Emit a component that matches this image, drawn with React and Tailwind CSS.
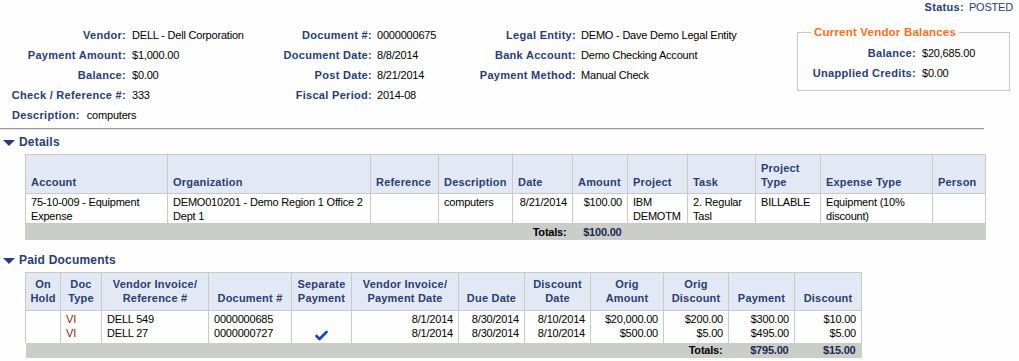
const blue = "text-[#2a3d73]";

const Label = ({ children, className = "" }) => (
  <div className={`font-bold tracking-[0.3px] ${blue} text-right ${className}`}>{children}</div>
);

const Triangle = () => (
  <svg width="12" height="7" viewBox="0 0 12 7" className="mr-[4px] mt-[3px]">
    <polygon points="0,0 12,0 6,6" fill="#2a3d73" />
  </svg>
);

const Check = () => (
  <svg width="13" height="11" viewBox="0 0 13 11" className="block mx-auto">
    <path d="M1.5 6 L4.5 9 L11.5 2" stroke="#1c3fd0" strokeWidth="2.6" fill="none" strokeLinecap="round" strokeLinejoin="round" />
  </svg>
);

const SectionTitle = ({ children }) => (
  <div className={`flex items-center h-[14px] pl-[3px] font-bold tracking-[0.2px] ${blue} text-[12px]`}>
    <Triangle />
    {children}
  </div>
);

const infoRows = [
  ["Vendor:", "DELL - Dell Corporation", "Document #:", "0000000675", "Legal Entity:", "DEMO - Dave Demo Legal Entity"],
  ["Payment Amount:", "$1,000.00", "Document Date:", "8/8/2014", "Bank Account:", "Demo Checking Account"],
  ["Balance:", "$0.00", "Post Date:", "8/21/2014", "Payment Method:", "Manual Check"],
  ["Check / Reference #:", "333", "Fiscal Period:", "2014-08", "", ""],
];

const detailCols = [
  ["Account", 142],
  ["Organization", 203],
  ["Reference", 68],
  ["Description", 74],
  ["Date", 60],
  ["Amount", 55],
  ["Project", 60],
  ["Task", 68],
  ["Project Type", 65],
  ["Expense Type", 112],
  ["Person", 53],
];

const detailRow = [
  "75-10-009 - Equipment Expense",
  "DEMO010201 - Demo Region 1 Office 2 Dept 1",
  "",
  "computers",
  "8/21/2014",
  "$100.00",
  "IBM DEMOTM",
  "2. Regular Tasl",
  "BILLABLE",
  "Equipment (10% discount)",
  "",
];

const paidCols = [
  ["On Hold", 35],
  ["Doc Type", 41],
  ["Vendor Invoice/ Reference #", 107],
  ["Document #", 83],
  ["Separate Payment", 60],
  ["Vendor Invoice/ Payment Date", 107],
  ["Due Date", 66],
  ["Discount Date", 66],
  ["Orig Amount", 73],
  ["Orig Discount", 65],
  ["Payment", 66],
  ["Discount", 67],
];

const paidRows = [
  ["", "VI", "DELL 549", "0000000685", false, "8/1/2014", "8/30/2014", "8/10/2014", "$20,000.00", "$200.00", "$300.00", "$10.00"],
  ["", "VI", "DELL 27", "0000000727", true, "8/1/2014", "8/30/2014", "8/10/2014", "$500.00", "$5.00", "$495.00", "$5.00"],
];

const rightCols = [5, 6, 7, 8, 9, 10, 11];

export default function App() {
  return (
    <div className="w-[1019px] h-[361px] bg-[#fdfefd] text-black font-['Liberation_Sans',Arial,sans-serif] text-[11px] leading-[14px] tracking-[-0.2px] overflow-hidden">
      <div className="flex justify-end items-center h-[14px] pr-[6px]">
        <span className={`font-bold tracking-[0.3px] ${blue} mr-[5px]`}>Status:</span>
        <span className={blue}>POSTED</span>
      </div>

      <div className="flex mt-[11px]">
        <div>
          <div className="grid grid-cols-[126px_124px_122px_95px_109px_216px] auto-rows-[20px] items-center">
            {infoRows.map((r, i) => (
              <div key={i} className="contents">
                <Label>{r[0]}</Label>
                <div className="pl-[6px] whitespace-nowrap">{r[1]}</div>
                <Label>{r[2]}</Label>
                <div className="pl-[5px] whitespace-nowrap">{r[3]}</div>
                <Label>{r[4]}</Label>
                <div className="pl-[5px] whitespace-nowrap">{r[5]}</div>
              </div>
            ))}
          </div>
          <div className="flex items-center h-[19px] pl-[12px]">
            <span className={`font-bold tracking-[0.3px] ${blue} mr-[7px]`}>Description:</span>
            <span>computers</span>
          </div>
        </div>

        <fieldset className="ml-[5px] w-[213px] h-[66px] border border-[#c8c8c8] pt-[4px]">
          <legend className="ml-[13px] px-[3px] font-bold tracking-[0.2px] text-[#ff6f1e] text-[11.5px] leading-[14px]">
            Current Vendor Balances
          </legend>
          <div className="grid grid-cols-[118px_auto] auto-rows-[20px] items-center">
            <Label>Balance:</Label>
            <div className="pl-[6px]">$20,685.00</div>
            <Label>Unapplied Credits:</Label>
            <div className="pl-[6px]">$0.00</div>
          </div>
        </fieldset>
      </div>

      <div className="mt-[4px] w-[984px] border-t border-[#9a9a9a] border-b border-b-[#e2e2e2]" />

      <div className="mt-[5px]">
        <SectionTitle>Details</SectionTitle>
      </div>

      <table className="mt-[5px] ml-[25px] table-fixed border-collapse w-[960px]">
        <colgroup>
          {detailCols.map(([n, w]) => (
            <col key={n} style={{ width: w }} />
          ))}
        </colgroup>
        <thead>
          <tr className="h-[39px] bg-[#e3e9f4]">
            {detailCols.map(([n]) => (
              <th key={n} className={`border border-[#c9c9c9] align-bottom text-left font-bold tracking-[0.2px] ${blue} px-[5px] pb-[4px]`}>
                {n}
              </th>
            ))}
          </tr>
        </thead>
        <tbody>
          <tr className="h-[29px]">
            {detailRow.map((v, i) => (
              <td key={i} className={`border border-[#c9c9c9] align-top px-[5px] pt-[1px] ${i === 4 || i === 5 ? "text-right" : "text-left"}`}>
                {v}
              </td>
            ))}
          </tr>
          <tr className="h-[16px] bg-[#cbcdc9] font-bold">
            <td colSpan={5} className="text-right pr-[6px] border-l border-[#cbcdc9]">Totals:</td>
            <td className="text-right pr-[6px] text-[#1c2a52]">$100.00</td>
            <td colSpan={5} />
          </tr>
        </tbody>
      </table>

      <div className="mt-[13px]">
        <SectionTitle>Paid Documents</SectionTitle>
      </div>

      <table className="mt-[5px] ml-[25px] table-fixed border-collapse w-[836px]">
        <colgroup>
          {paidCols.map(([n, w]) => (
            <col key={n} style={{ width: w }} />
          ))}
        </colgroup>
        <thead>
          <tr className="h-[38px] bg-[#e3e9f4]">
            {paidCols.map(([n]) => (
              <th key={n} className={`border border-[#c9c9c9] align-bottom text-center font-bold tracking-[0.2px] ${blue} px-[2px] pb-[5px]`}>
                {n}
              </th>
            ))}
          </tr>
        </thead>
        <tbody>
          {paidRows.map((r, ri) => (
            <tr key={ri} className={ri === 0 ? "h-[15px]" : "h-[17px]"}>
              {r.map((v, i) => {
                if (i === 4) {
                  return (
                    <td key={i} className={`border-x border-[#c9c9c9] align-top p-0 ${ri === 1 ? "pt-[4px]" : ""}`}>
                      {v ? <Check /> : null}
                    </td>
                  );
                }
                return (
                  <td
                    key={i}
                    className={`border-x border-[#c9c9c9] align-top whitespace-nowrap px-[5px] ${ri === 0 ? "pt-[1px]" : "pb-[3px]"} ${
                      rightCols.includes(i) ? "text-right" : "text-left"
                    } ${i === 1 ? "text-[#7a2a10]" : ""}`}
                  >
                    {v}
                  </td>
                );
              })}
            </tr>
          ))}
          <tr className="h-[15px] bg-[#cbcdc9] font-bold">
            <td colSpan={10} className="text-right pr-[6px]">Totals:</td>
            <td className="text-right pr-[6px] text-[#1c2a52]">$795.00</td>
            <td className="text-right pr-[6px] text-[#1c2a52]">$15.00</td>
          </tr>
        </tbody>
      </table>
    </div>
  );
}
